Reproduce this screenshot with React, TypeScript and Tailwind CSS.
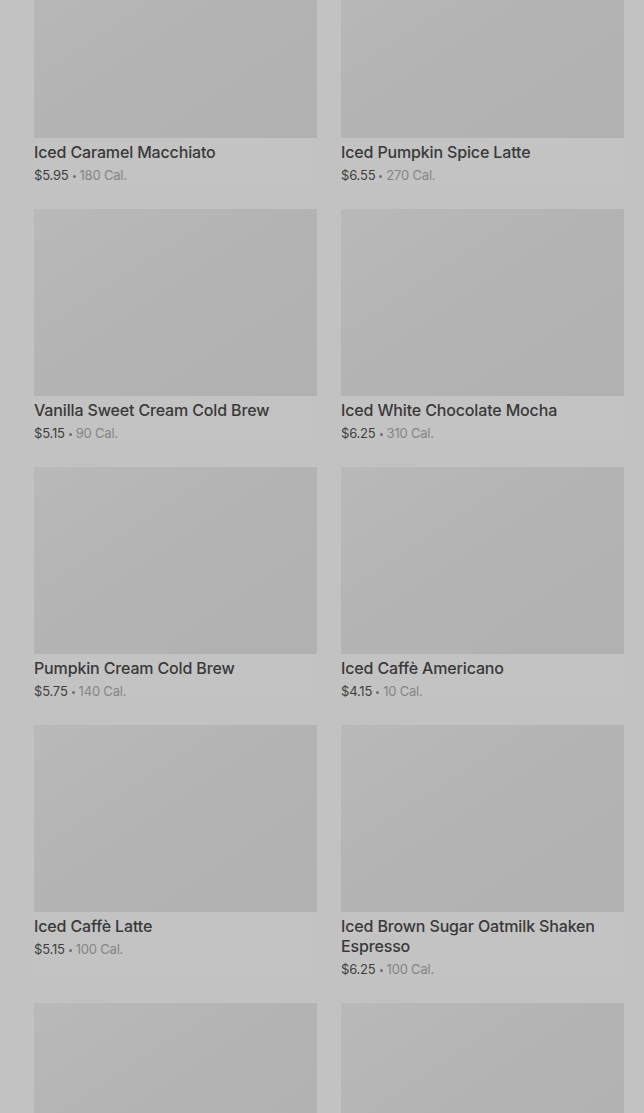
import React from 'react';

type Drink = { name: string; price: string; cal: string };

const drinks: Drink[] = [
  { name: 'Iced Caramel Macchiato', price: '$5.95', cal: '180 Cal.' },
  { name: 'Iced Pumpkin Spice Latte', price: '$6.55', cal: '270 Cal.' },
  { name: 'Vanilla Sweet Cream Cold Brew', price: '$5.15', cal: '90 Cal.' },
  { name: 'Iced White Chocolate Mocha', price: '$6.25', cal: '310 Cal.' },
  { name: 'Pumpkin Cream Cold Brew', price: '$5.75', cal: '140 Cal.' },
  { name: 'Iced Caffè Americano', price: '$4.15', cal: '10 Cal.' },
  { name: 'Iced Caffè Latte', price: '$5.15', cal: '100 Cal.' },
  { name: 'Iced Brown Sugar Oatmilk Shaken Espresso', price: '$6.25', cal: '100 Cal.' },
  { name: '', price: '', cal: '' },
  { name: '', price: '', cal: '' },
];

const DrinkCard = ({ drink }: { drink: Drink }) => {
  return (
    <div className="flex flex-col bg-[#c3c3c3]">
      {/* image placeholder */}
      <div className="h-[187px] w-full bg-gradient-to-br from-[#b9b9b9] via-[#b3b3b3] to-[#b1b1b1]" />
      {drink.name && (
        <>
          <p className="mt-1 text-base leading-5 font-medium tracking-[-0.15px] text-[#393939]">{drink.name}</p>
          <div className="mt-1 mb-[-1px] flex h-5 items-center gap-[4px] text-[13px] tracking-[-0.2px]">
            <span className="text-[#3f3f3f]">{drink.price}</span>
            <span className="h-[3px] w-[3px] rounded-full bg-[#6f6f6f]" />
            <span className="text-[#858585]">{drink.cal}</span>
          </div>
        </>
      )}
    </div>
  );
};

const App = () => {
  return (
    <div
      className="h-[1113px] overflow-hidden bg-[#c2c2c2]"
      style={{ fontFamily: 'Inter, "Noto Sans", sans-serif' }}
    >
      <div className="-mt-[49px] grid grid-cols-2 gap-x-6 gap-y-6 pl-[34px] pr-5">
        {drinks.map((d, i) => (
          <DrinkCard key={i} drink={d} />
        ))}
      </div>
    </div>
  );
};

export default App;
